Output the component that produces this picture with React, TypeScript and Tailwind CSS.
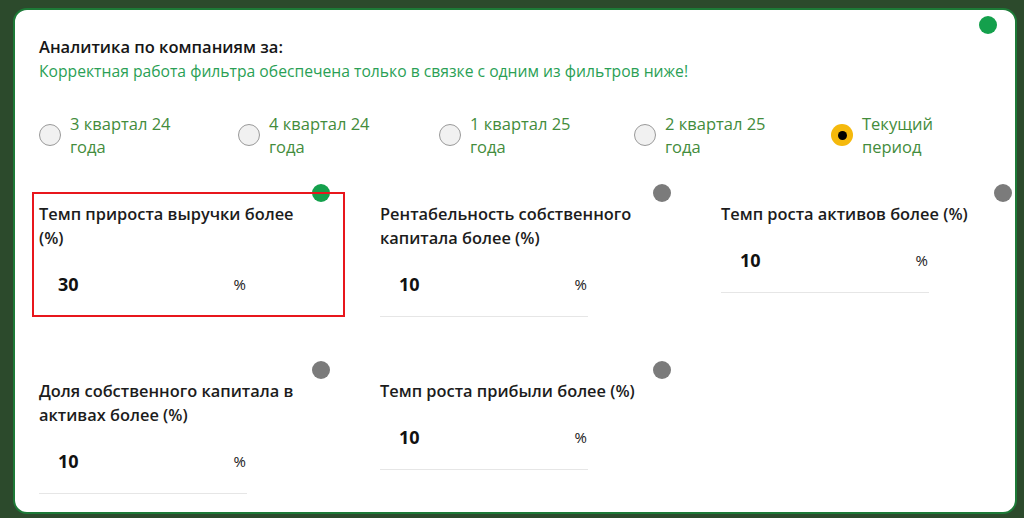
import React, { useState } from 'react'

interface Filter {
  id: string
  title: string[]
  value: string
  active: boolean
}

const periods = [
  { id: 'q3-24', lines: ['3 квартал 24', 'года'], width: 'w-[199px]' },
  { id: 'q4-24', lines: ['4 квартал 24', 'года'], width: 'w-[201px]' },
  { id: 'q1-25', lines: ['1 квартал 25', 'года'], width: 'w-[195px]' },
  { id: 'q2-25', lines: ['2 квартал 25', 'года'], width: 'w-[197px]' },
  { id: 'current', lines: ['Текущий', 'период'], width: 'w-[120px]' },
]

const filters: Filter[] = [
  { id: 'revenue', title: ['Темп прироста выручки более', '(%)'], value: '30', active: true },
  { id: 'roe', title: ['Рентабельность собственного', 'капитала более (%)'], value: '10', active: false },
  { id: 'assets', title: ['Темп роста активов более (%)'], value: '10', active: false },
  { id: 'equity', title: ['Доля собственного капитала в', 'активах более (%)'], value: '10', active: false },
  { id: 'profit', title: ['Темп роста прибыли более (%)'], value: '10', active: false },
]

const FilterBlock: React.FC<{ filter: Filter; highlighted?: boolean }> = ({ filter, highlighted }) => (
  <div className="relative pt-[18px]">
    <span
      className={`absolute right-0 top-0 h-[18px] w-[18px] rounded-full ${
        filter.active ? 'bg-[#14a04c]' : 'bg-[#7b7b7b]'
      }`}
    />
    <div className="text-[16.4px] font-semibold leading-[24px] text-[#1c1c1c]">
      {filter.title.map((line, i) => (
        <div key={i}>{line}</div>
      ))}
    </div>
    <div className="mt-[20px] flex w-[208px] items-center justify-between border-b border-[#e6e6e6] pb-[18px] pl-[19px] pr-[1px]">
      <span className="text-[18px] font-bold leading-[28px] text-[#111]">{filter.value}</span>
      <span className="text-[15px] leading-[28px] text-[#1a1a1a]">%</span>
    </div>
    {/* red highlight frame */}
    {highlighted && (
      <div className="pointer-events-none absolute left-[-7px] top-[8px] h-[125px] w-[313px] border-[2.5px] border-[#e8161c]" />
    )}
  </div>
)

export default function App() {
  const [period, setPeriod] = useState('current')

  return (
    <div
      className="h-[518px] w-[1024px] overflow-hidden bg-[#2c4a2c] pl-[13px] pt-[8px]"
      style={{ fontFamily: '"Open Sans", "Noto Sans", sans-serif' }}
    >
      <div className="relative h-[506px] w-[1004px] rounded-[14px] border-2 border-[#1d7a37] bg-white pl-[24px] pt-[26px]">
        <span className="absolute right-[18px] top-[6px] h-[18px] w-[18px] rounded-full bg-[#14a04c]" />

        <div className="text-[16.5px] font-semibold leading-[22px] text-[#161616]">Аналитика по компаниям за:</div>
        <div className="mt-[2px] text-[15.7px] leading-[22px] text-[#2a9f55]">
          Корректная работа фильтра обеспечена только в связке с одним из фильтров ниже!
        </div>

        <div className="mt-[30px] flex">
          {periods.map((p) => {
            const selected = period === p.id
            return (
              <label key={p.id} className={`flex cursor-pointer items-center ${p.width}`} onClick={() => setPeriod(p.id)}>
                {selected ? (
                  <span className="flex h-[22px] w-[22px] shrink-0 items-center justify-center rounded-full bg-[#f5b90c]">
                    <span className="h-[9px] w-[9px] rounded-full bg-black" />
                  </span>
                ) : (
                  <span className="h-[22px] w-[22px] shrink-0 rounded-full border border-[#9a9a9a] bg-[#f1f1f1]" />
                )}
                <span className="ml-[9px] text-[16.5px] leading-[23px] text-[#438c3c]">
                  {p.lines.map((l, i) => (
                    <span key={i} className="block">
                      {l}
                    </span>
                  ))}
                </span>
              </label>
            )
          })}
        </div>

        <div className="mt-[26px] grid grid-cols-[291px_291px_291px] gap-x-[50px] gap-y-[44px]">
          {filters.map((f, i) => (
            <FilterBlock key={f.id} filter={f} highlighted={i === 0} />
          ))}
        </div>
      </div>
    </div>
  )
}
